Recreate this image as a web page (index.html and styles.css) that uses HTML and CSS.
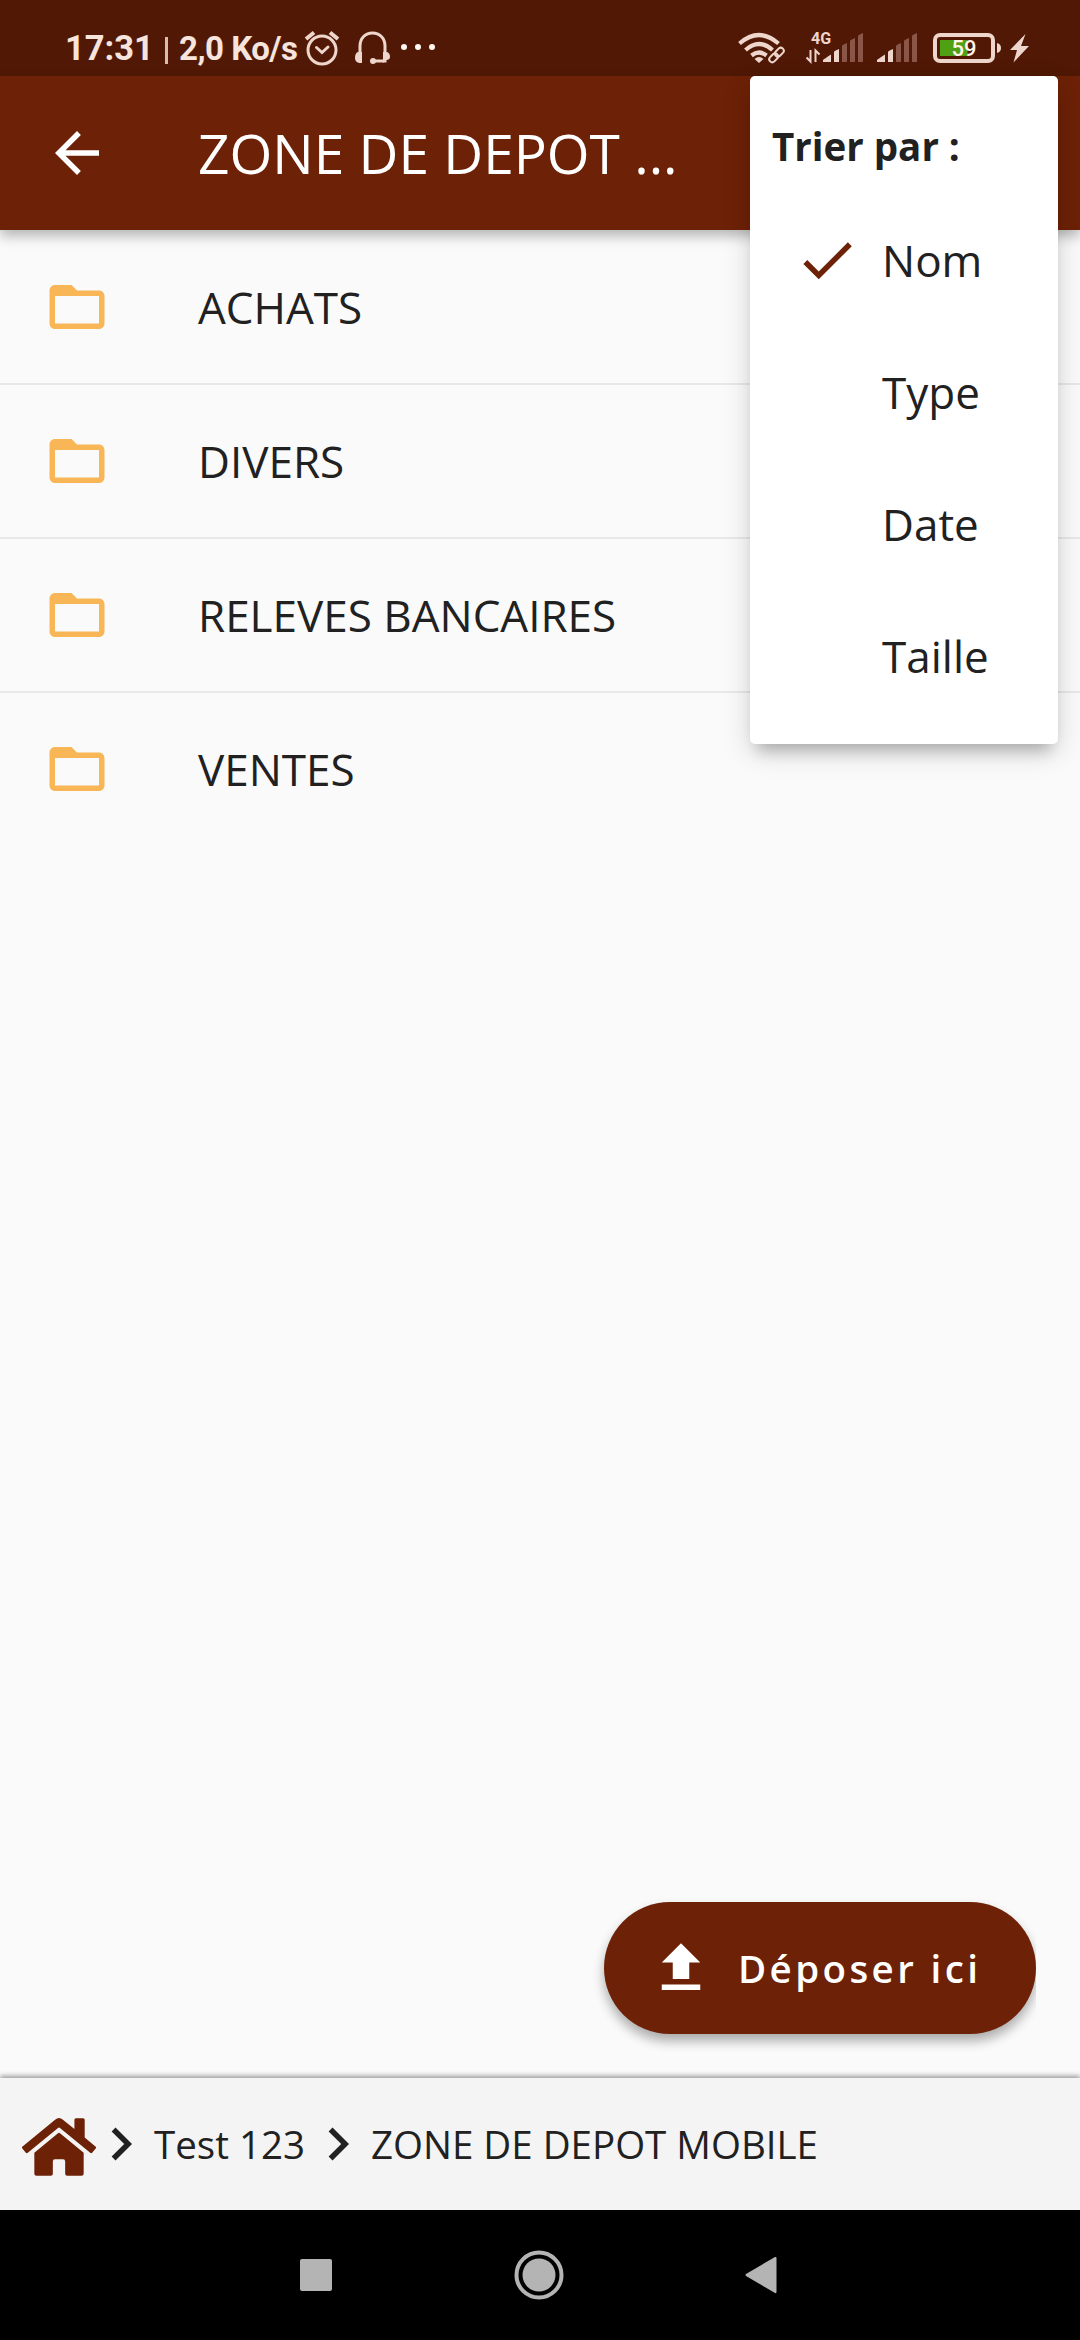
FILE: index.html
```html
<!DOCTYPE html>
<html lang="fr">
<head>
<meta charset="utf-8">
<title>Zone de depot</title>
<link rel="stylesheet" href="styles.css">
</head>
<body>
<svg class="defs" width="0" height="0">
  <symbol id="folder" viewBox="0 0 24 24"><path d="M20 6h-8l-2-2H4c-1.1 0-1.99.9-1.99 2L2 18c0 1.1.9 2 2 2h16c1.1 0 2-.9 2-2V8c0-1.1-.9-2-2-2zm0 12H4V8h16v10z"/></symbol>
  <symbol id="chevron" viewBox="0 0 24 24"><path d="M10 6L8.59 7.41 13.17 12l-4.58 4.59L10 18l6-6z"/></symbol>
  <symbol id="signal" viewBox="823 31 42 33">
    <path d="M823 62v-2q1-1 8-5.500v7.500zM834 62V52q0-1 5-3v13z"/>
    <path class="dim" d="M842 62V46q0-1 5-3v19zM850 62V41q0-1 5-3v24zM858 62V36q0-1 5-3v29z"/>
  </symbol>
</svg>
<div class="screen">
  <header class="status">
    <span class="clock">17:31</span>
    <span class="speed"><i class="bar"></i>2,0 Ko/s</span>
    <svg class="alarm" viewBox="303 29 38 38" width="38" height="38"><g class="line"><circle cx="322" cy="50" r="14"/><path d="M316.500 47.500l5.500 5 6-5.500"/><path class="bell" d="M306 39l8-6.500M338 39l-8-6.500"/></g></svg>
    <svg class="headset" viewBox="354 30 38 36" width="38" height="36"><path class="line" d="M360 55V46c0-8 5.500-13 12.500-13S385 38 385 46v9M373 61h12v-5"/><path d="M358 52h4v11h-3q-4-1-4-5 0-5 3-6zM387 52h-4v11l3-3q4 0 4-3 0-4-3-5z"/><circle cx="373" cy="61" r="3"/></svg>
    <svg class="dots" viewBox="400 43 36 8" width="36" height="8"><circle cx="404" cy="47" r="3"/><circle cx="418" cy="47" r="3"/><circle cx="432" cy="47" r="3"/></svg>
    <svg class="wifi" viewBox="736 29 50 36" width="50" height="36"><g class="arc"><path d="M739.500 43.500q19.500-17 39 0M745.500 50q13.500-12 27 0M751.500 55.500q7.500-6 15 0"/></g><path d="M754.500 59q4.500-4 9 0l-4.500 4z"/><g class="cut"><rect x="-7" y="-3.500" width="9" height="7" rx="3.500" transform="translate(775.500 56.500) rotate(-45)"/></g><g class="link"><rect x="-9" y="-3" width="10" height="6" rx="3" transform="translate(776.500 55) rotate(-45)"/><rect x="-1" y="-3" width="10" height="6" rx="3" transform="translate(776.500 55) rotate(-45)"/></g></svg>
    <svg class="data" viewBox="804 29 30 36" width="30" height="36"><text class="net" x="811" y="43.500">4G</text><path class="thin" d="M810.500 50v11.500l-4-4M815.500 62V50.500l4 4"/></svg>
    <svg class="sig one" width="42" height="33"><use href="#signal"/></svg>
    <svg class="sig two" width="42" height="33"><use href="#signal"/></svg>
    <svg class="battery" viewBox="931 31 72 34" width="72" height="34"><rect class="charge" x="940" y="40" width="27.500" height="16"/><rect class="case" x="935" y="35" width="58" height="26" rx="5"/><path d="M997 43q4 1 4 5t-4 5z"/><text class="level" x="951.500" y="56">59</text></svg>
    <svg class="bolt" viewBox="1008 33 21 30" width="21" height="30"><path d="M1024.500 34l-15.500 16h7l-3.500 12.500 15.500-16.500h-8z"/></svg>
  </header>

  <div class="appbar">
    <svg class="icon" viewBox="0 0 24 24"><path d="M20 11H7.830l5.590-5.590L12 4l-8 8 8 8 1.410-1.410L7.830 13H20v-2z"/></svg>
    <h1>ZONE DE DEPOT ...</h1>
  </div>

  <main>
    <ul class="files">
      <li><svg class="icon"><use href="#folder"/></svg><span>ACHATS</span></li>
      <li><svg class="icon"><use href="#folder"/></svg><span>DIVERS</span></li>
      <li><svg class="icon"><use href="#folder"/></svg><span>RELEVES BANCAIRES</span></li>
      <li><svg class="icon"><use href="#folder"/></svg><span>VENTES</span></li>
    </ul>
    <div class="fab-clip">
      <button class="fab"><svg class="icon" viewBox="0 0 24 24"><path d="M9 16h6v-6h4l-7-7-7 7h4zm-4 2h14v2H5z"/></svg><span>Déposer ici</span></button>
    </div>
  </main>

  <nav class="crumbs">
    <svg class="home" viewBox="0 0 576 512"><path d="M280.370 148.260L96 300.110V464a16 16 0 0 0 16 16l112.060-.29a16 16 0 0 0 15.920-16V368a16 16 0 0 1 16-16h64a16 16 0 0 1 16 16v95.640a16 16 0 0 0 16 16.050L464 480a16 16 0 0 0 16-16V300L295.670 148.260a12.190 12.190 0 0 0-15.300 0zM571.600 251.470L488 182.560V44.050a12 12 0 0 0-12-12h-56a12 12 0 0 0-12 12v72.610L318.470 43a48 48 0 0 0-61 0L4.340 251.470a12 12 0 0 0-1.600 16.900l25.500 31A12 12 0 0 0 45.150 301l235.220-193.740a12.190 12.190 0 0 1 15.300 0L530.900 301a12 12 0 0 0 16.900-1.600l25.500-31a12 12 0 0 0-1.700-16.930z"/></svg>
    <svg class="icon"><use href="#chevron"/></svg>
    <span class="parent">Test 123</span>
    <svg class="icon"><use href="#chevron"/></svg>
    <span>ZONE DE DEPOT MOBILE</span>
  </nav>

  <footer class="sysnav">
    <svg viewBox="0 0 32 32" width="32" height="32"><rect width="32" height="32" rx="2"/></svg>
    <svg viewBox="0 0 50 50" width="50" height="50"><circle class="ring" cx="25" cy="25" r="22.500"/><circle cx="25" cy="25" r="16.500"/></svg>
    <svg viewBox="0 0 32 38" width="32" height="38"><path d="M30 1q1.500-.5 1.500 1v34q0 1.500-1.500 1L1 20q-1-1 0-2z"/></svg>
  </footer>

  <div class="menu">
    <h2>Trier par :</h2>
    <ul>
      <li><svg class="icon" viewBox="0 0 24 24"><path d="M9 16.170L4.830 12l-1.420 1.410L9 19 21 7l-1.410-1.410z"/></svg><span>Nom</span></li>
      <li><i class="icon"></i><span>Type</span></li>
      <li><i class="icon"></i><span>Date</span></li>
      <li><i class="icon"></i><span>Taille</span></li>
    </ul>
  </div>
</div>
</body>
</html>
```
FILE: styles.css
```css
* { box-sizing: border-box; }
body { margin: 0; }
ul { list-style: none; margin: 0; padding: 0; }
h1, h2 { margin: 0; }
svg { display: block; flex: none; }
.defs { position: absolute; }

.screen {
  position: relative;
  width: 1080px;
  height: 2340px;
  display: flex;
  flex-direction: column;
  overflow: hidden;
  background: #fafafa;
  color: #212121;
  font-family: "Open Sans", "Noto Sans", sans-serif;
}
.icon { width: 66px; height: 66px; flex: none; fill: currentColor; }

/* Status bar */
.status {
  height: 76px;
  flex: none;
  display: flex;
  align-items: flex-start;
  background: #511905;
  color: #f6e4dd;
  fill: #eed6cc;
  font-family: Roboto, sans-serif;
  font-weight: 700;
  white-space: nowrap;
}
.clock { width: 99px; margin-left: 65px; padding-top: 28px; font-size: 34.500px; line-height: 41px; }
.speed { width: 139px; padding-top: 30px; font-size: 33px; line-height: 38px; letter-spacing: -0.500px; display: flex; }
.bar { width: 3px; height: 27px; margin: 7px 11px 0 1px; background: #d9bdb2; }
.alarm { margin-top: 29px; }
.headset { margin: 30px 0 0 13px; }
.dots { margin: 43px 0 0 8px; fill: #fff7f2; }
.wifi { margin: 29px 0 0 300px; }
.data { margin: 29px 0 0 18px; }
.sig { margin-top: 31px; }
.one { margin-left: -11px; }
.two { margin-left: 12px; }
.battery { margin: 31px 0 0 12px; }
.bolt { margin: 33px 0 0 6px; }
.line { fill: none; stroke: #eed6cc; stroke-width: 3; stroke-linecap: round; }
.bell { stroke-width: 4; stroke-linecap: butt; }
.arc { fill: none; stroke: #eed6cc; stroke-width: 4.200; }
.cut { fill: #511905; stroke: #511905; stroke-width: 4; }
.link { fill: none; stroke: #eed6cc; stroke-width: 2; }
.thin { fill: none; stroke: #eed6cc; stroke-width: 2; }
.dim { fill: #8a5647; }
.case { fill: none; stroke: #eed6cc; stroke-width: 4; }
.charge { fill: #4fa012; }
.net { font-size: 16px; }
.level { font-size: 22px; font-weight: 500; fill: #fff3ec; }

/* App bar */
.appbar {
  position: relative;
  height: 154px;
  flex: none;
  display: flex;
  align-items: center;
  gap: 88px;
  padding: 0 44px;
  background: #6d2106;
  color: #fff;
  box-shadow: 0 6px 12px rgba(0, 0, 0, .28);
}
.appbar h1 { padding-bottom: 2px; font-size: 55px; line-height: 75px; font-weight: 400; white-space: nowrap; }

/* File list */
main { flex: 1; display: flex; flex-direction: column; justify-content: space-between; }
.files li {
  height: 154px;
  display: flex;
  align-items: center;
  gap: 88px;
  padding-left: 44px;
  font-size: 44px;
  line-height: 60px;
  box-shadow: 0 1px #e8e8e8, inset 0 -1px #e8e8e8;
}
.files li:last-child { box-shadow: none; }
.files .icon { fill: #f8b657; }

.fab-clip { align-self: flex-end; padding: 20px 0 30px 20px; margin: 0 44px 14px 0; overflow: hidden; }
.fab {
  width: 432px;
  height: 132px;
  display: flex;
  align-items: center;
  gap: 24px;
  padding: 0 0 0 44px;
  border: 0;
  border-radius: 66px;
  background: #6d2106;
  color: #fff;
  font: 600 38.500px/52px "Open Sans", sans-serif;
  letter-spacing: 3.400px;
  white-space: nowrap;
  box-shadow: 0 7px 12px rgba(0, 0, 0, .32);
}

/* Breadcrumb */
.crumbs {
  position: relative;
  height: 132px;
  flex: none;
  display: flex;
  align-items: center;
  padding-left: 22px;
  background: #f4f4f4;
  font-size: 38.500px;
  line-height: 52px;
  white-space: nowrap;
  box-shadow: 0 -2px 5px rgba(0, 0, 0, .4);
}
.home { width: 74px; height: 66px; margin: 6px -8px 0 0; fill: #6d2106; }
.parent { width: 151px; }

/* System navigation */
.sysnav {
  position: relative;
  height: 130px;
  flex: none;
  display: flex;
  align-items: center;
  justify-content: space-between;
  padding: 0 303px 0 300px;
  background: #000;
  fill: #b4b4b4;
}
.ring { fill: none; stroke: #b4b4b4; stroke-width: 4; }

/* Sort menu */
.menu {
  position: absolute;
  top: 76px;
  right: 22px;
  width: 308px;
  height: 668px;
  padding: 22px 0;
  border-radius: 5px;
  background: #fff;
  box-shadow: 0 14px 14px -8px rgba(0, 0, 0, .22), 0 8px 28px rgba(0, 0, 0, .16);
}
.menu h2 { height: 96px; padding: 22px 22px 0; font-size: 38.500px; line-height: 52px; font-weight: 700; }
.menu li {
  height: 132px;
  display: flex;
  align-items: center;
  gap: 22px;
  padding-left: 44px;
  font-size: 44px;
  line-height: 60px;
}
.menu .icon { color: #6d2106; }
```
